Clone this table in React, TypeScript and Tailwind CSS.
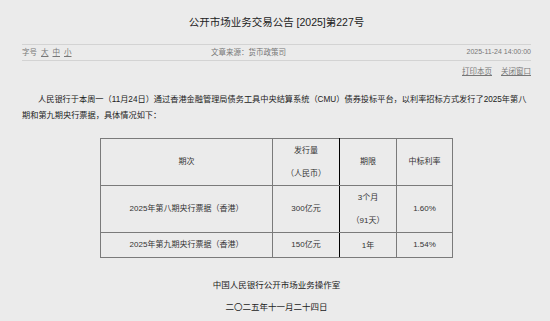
import React from 'react';

const FONT = '"Liberation Sans", "Noto Sans CJK SC", sans-serif';

interface BillRow {
  name: string;
  amount: string;
  term: string[];
  rate: string;
}

const rows: BillRow[] = [
  { name: '2025年第八期央行票据（香港）', amount: '300亿元', term: ['3个月', '（91天）'], rate: '1.60%' },
  { name: '2025年第九期央行票据（香港）', amount: '150亿元', term: ['1年'], rate: '1.54%' },
];

const App: React.FC = () => {
  return (
    <div className="min-h-screen w-[550px] h-[321px] overflow-hidden bg-[#ebebeb] text-[#333]" style={{ fontFamily: FONT }}>
      <div className="mx-[22px] w-[509px]">
        <h1 className="pt-[14px] h-[44px] text-center text-[10.5px] leading-[16px] font-normal text-[#222]">
          公开市场业务交易公告 [2025]第227号
        </h1>

        <div className="border-t border-b border-[#d3d3d3] h-[17px] flex items-center text-[7.5px] text-[#777]">
          <div className="w-[189px] flex gap-[4px]">
            <span>字号</span>
            <span className="underline">大</span>
            <span className="underline">中</span>
            <span className="underline">小</span>
          </div>
          <div className="flex-1">文章来源：货币政策司</div>
          <div className="text-[7px]">2025-11-24 14:00:00</div>
        </div>

        <div className="flex justify-end gap-[9px] pt-[5px] text-[7.5px] leading-[12px] text-[#777]">
          <span className="underline">打印本页</span>
          <span className="underline">关闭窗口</span>
        </div>

        <p className="mt-[14px] text-[8.2px] leading-[16px] text-[#222]">
          <span className="block whitespace-nowrap pl-[16px]">
            人民银行于本周一（11月24日）通过香港金融管理局债务工具中央结算系统（CMU）债券投标平台，以利率招标方式发行了2025年第八
          </span>
          <span className="block">期和第九期央行票据，具体情况如下：</span>
        </p>

        <table className="mt-[14px] ml-[78px] border-collapse text-[8px] text-center text-[#333]">
          <thead>
            <tr className="h-[47px]">
              <th className="w-[172px] font-normal border border-[#7a7a7a]">期次</th>
              <th className="w-[67px] font-normal border border-[#7a7a7a] border-r-black leading-[23px]">
                发行量
                <br />
                （人民币）
              </th>
              <th className="w-[57px] font-normal border border-[#7a7a7a]">期限</th>
              <th className="w-[56px] font-normal border border-[#7a7a7a]">中标利率</th>
            </tr>
          </thead>
          <tbody>
            {rows.map((r) => (
              <tr key={r.name} className={r.term.length > 1 ? 'h-[47px]' : 'h-[25px]'}>
                <td className="border border-[#7a7a7a]">{r.name}</td>
                <td className="border border-[#7a7a7a] border-r-black">{r.amount}</td>
                <td className="border border-[#7a7a7a] leading-[23px]">
                  {r.term.map((t, i) => (
                    <div key={i}>{t}</div>
                  ))}
                </td>
                <td className="border border-[#7a7a7a]">{r.rate}</td>
              </tr>
            ))}
          </tbody>
        </table>

        <div className="mt-[16px] text-center text-[8.5px] leading-[22px] text-[#222]">
          <div>中国人民银行公开市场业务操作室</div>
          <div>二〇二五年十一月二十四日</div>
        </div>
      </div>
    </div>
  );
};

export default App;
